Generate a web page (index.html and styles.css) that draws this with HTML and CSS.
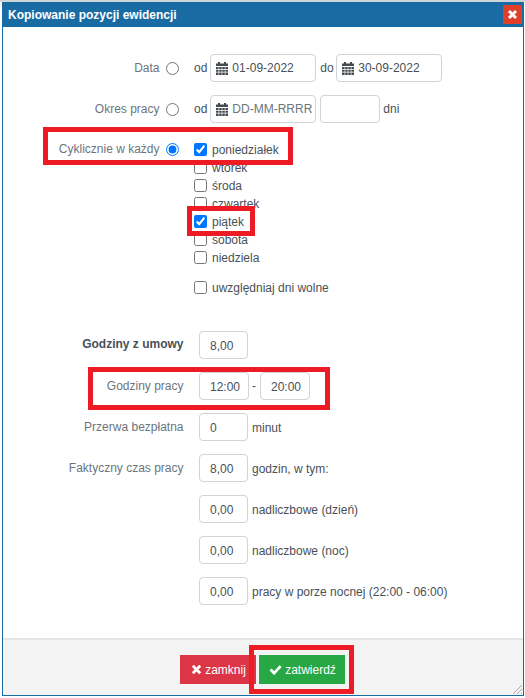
FILE: index.html
```html
<!DOCTYPE html>
<html lang="pl">
<head>
<meta charset="utf-8">
<title>Kopiowanie pozycji ewidencji</title>
<link rel="stylesheet" href="styles.css">
</head>
<body>
<svg class="defs" width="0" height="0" aria-hidden="true">
  <symbol id="cal" viewBox="0 0 12 13">
    <path fill="#454a50" d="M2 0h2v1.5h4V0h2v1.5h2V4H0V1.5h2z"/>
    <path fill="#454a50" d="M0 5h2.6v2.1H0zM3.2 5h2.5v2.1H3.2zM6.3 5h2.5v2.1H6.3zM9.4 5H12v2.1H9.4zM0 7.7h2.6v2.1H0zM3.2 7.7h2.5v2.1H3.2zM6.3 7.7h2.5v2.1H6.3zM9.4 7.7H12v2.1H9.4zM0 10.4h2.6V13H0zM3.2 10.4h2.5V13H3.2zM6.3 10.4h2.5V13H6.3zM9.4 10.4H12V13H9.4z"/>
  </symbol>
</svg>
<div class="dialog">
  <header class="titlebar">
    <h1 class="title">Kopiowanie pozycji ewidencji</h1>
    <span class="close">
      <svg width="11" height="11" viewBox="0 0 11 11"><path d="M2 2l7 7M9 2l-7 7" stroke="#fff" stroke-width="3" fill="none"/></svg>
    </span>
  </header>
  <main class="content">
    <div class="row">
      <label class="lbl">Data</label>
      <input class="radio" type="radio" name="mode">
      <span class="unit unit-od">od</span>
      <div class="field date"><svg class="cal" width="12" height="13"><use href="#cal"/></svg>01-09-2022</div>
      <span class="unit unit-do">do</span>
      <div class="field date"><svg class="cal" width="12" height="13"><use href="#cal"/></svg>30-09-2022</div>
    </div>
    <div class="row">
      <label class="lbl">Okres pracy</label>
      <input class="radio" type="radio" name="mode">
      <span class="unit unit-od">od</span>
      <div class="field date placeholder"><svg class="cal" width="12" height="13"><use href="#cal"/></svg>DD-MM-RRRR</div>
      <div class="field days"></div>
      <span class="unit unit-dni">dni</span>
    </div>
    <div class="cycle">
      <div class="cycle-head">
        <label class="lbl">Cyklicznie w każdy</label>
        <input class="radio" type="radio" name="mode" checked>
      </div>
      <div class="days-list">
        <label class="check"><input type="checkbox" checked>poniedziałek</label>
        <label class="check"><input type="checkbox">wtorek</label>
        <label class="check"><input type="checkbox">środa</label>
        <label class="check"><input type="checkbox">czwartek</label>
        <label class="check"><input type="checkbox" checked>piątek</label>
        <label class="check"><input type="checkbox">sobota</label>
        <label class="check"><input type="checkbox">niedziela</label>
        <label class="check check-free"><input type="checkbox">uwzględniaj dni wolne</label>
      </div>
    </div>
    <div class="hours">
      <div class="row2"><label class="lbl2 strong">Godziny z umowy</label><div class="field num">8,00</div></div>
      <div class="row2"><label class="lbl2">Godziny pracy</label><div class="field num time">12:00</div><span class="dash">-</span><div class="field num time">20:00</div></div>
      <div class="row2"><label class="lbl2">Przerwa bezpłatna</label><div class="field num">0</div><span class="unit">minut</span></div>
      <div class="row2"><label class="lbl2">Faktyczny czas pracy</label><div class="field num">8,00</div><span class="unit">godzin, w tym:</span></div>
      <div class="row2"><span class="lbl2"></span><div class="field num">0,00</div><span class="unit">nadliczbowe (dzień)</span></div>
      <div class="row2"><span class="lbl2"></span><div class="field num">0,00</div><span class="unit">nadliczbowe (noc)</span></div>
      <div class="row2"><span class="lbl2"></span><div class="field num">0,00</div><span class="unit">pracy w porze nocnej (22:00 - 06:00)</span></div>
    </div>
  </main>
  <footer class="footer">
    <button class="btn btn-red" type="button">
      <svg width="11" height="11" viewBox="0 0 11 11"><path d="M1.8 1.8l7.4 7.4M9.2 1.8l-7.4 7.4" stroke="#fff" stroke-width="2.8" fill="none"/></svg>zamknij
    </button>
    <button class="btn btn-green" type="button">
      <svg width="13" height="11" viewBox="0 0 13 11"><path d="M1.5 5.5l3.6 3.6 6.5-7" stroke="#fff" stroke-width="2.8" fill="none"/></svg>zatwierdź
    </button>
    <svg class="grip" width="11" height="11" viewBox="0 0 11 11"><path d="M1 10l9-9M5 10l5-5M9 10l1-1" stroke="#aaa" fill="none"/></svg>
  </footer>
</div>
<div class="mark mark-a"></div>
<div class="mark mark-b"></div>
<div class="mark mark-c"></div>
<div class="mark mark-d"></div>
</body>
</html>
```

FILE: styles.css
```css
* { box-sizing: border-box; }
html, body { margin: 0; padding: 0; }
body {
  position: relative;
  width: 525px;
  height: 698px;
  overflow: hidden;
  background: #fff;
  border-top: 2px solid #cfd4d8;
  font-family: "Liberation Sans", Arial, sans-serif;
  font-size: 12px;
  color: #495057;
}
.defs { position: absolute; }
.dialog {
  display: flex;
  flex-direction: column;
  width: 522px;
  height: 694px;
  margin-left: 2px;
  border: 1px solid #196ca3;
  border-width: 0 1px 1px 1px;
  background: #fff;
}
.titlebar {
  display: flex;
  align-items: center;
  justify-content: space-between;
  flex: none;
  height: 25px;
  padding: 0 1px 0 5px;
  background: #196ca3;
}
.title { margin: 0; font-size: 12px; font-weight: bold; color: #fff; }
.close {
  display: flex;
  align-items: center;
  justify-content: center;
  width: 19px;
  height: 19px;
  background: #e0402a;
}
.content { flex: 1; padding-top: 27px; }
.row { display: flex; align-items: center; height: 28px; margin-bottom: 13px; }
.lbl { width: 156.5px; text-align: right; color: #6c757d; }
.radio { width: 13px; height: 13px; margin: 0 0 0 6.5px; flex: none; }
.unit { white-space: nowrap; color: #495057; }
.unit-od { margin-left: 15px; margin-right: 3px; }
.unit-do { margin-left: 4px; margin-right: 2.5px; }
.unit-dni { margin-left: 3px; }
.field {
  display: flex;
  align-items: center;
  height: 28px;
  border: 1px solid #ced4da;
  border-radius: 4px;
  background: #fff;
  color: #495057;
  white-space: nowrap;
}
.date { width: 106px; padding-left: 5px; }
.cal { flex: none; margin-right: 4px; }
.placeholder { color: #6c757d; }
.days { width: 60px; margin-left: 4px; }
.cycle { position: relative; margin-top: 17px; }
.cycle-head { position: absolute; top: 0; left: 0; display: flex; align-items: center; height: 18px; }
.days-list { display: flex; flex-direction: column; padding-left: 191px; }
.check { display: flex; align-items: center; height: 18px; padding-top: 2px; color: #495057; }
.check input { width: 13px; height: 13px; margin: -2px 5px 0 0; flex: none; }
.check-free { margin-top: 12px; }
.hours { display: flex; flex-direction: column; gap: 13px; margin-top: 35px; }
.row2 { display: flex; align-items: center; height: 28px; }
.row2 .unit { padding-top: 2px; }
.lbl2 { width: 180.5px; margin-right: 15.5px; text-align: right; color: #6c757d; align-self: flex-start; padding-top: 7px; }
.lbl2.strong { font-weight: bold; color: #495057; padding-top: 6px; }
.num { width: 49px; padding: 2px 0 0 10px; margin-right: 4px; }
.time { width: 50px; margin-right: 3px; }
.dash { margin-right: 4px; }
.footer {
  position: relative;
  display: flex;
  justify-content: center;
  gap: 3px;
  flex: none;
  height: 57px;
  padding: 15px 1px 0 0;
  border-top: 2px solid #e5e5e5;
  background: #f3f3f3;
}
.btn {
  display: flex;
  align-items: center;
  justify-content: center;
  gap: 3px;
  height: 29px;
  padding: 0 0 0 1px;
  border: 0;
  color: #fff;
  font-family: inherit;
  font-size: 12px;
}
.btn-red { width: 76px; background: #dc3545; }
.btn-green { width: 86px; background: #28a745; }
.grip { position: absolute; right: 0; bottom: 0; }
.mark { position: absolute; border: 5px solid #ed1c24; pointer-events: none; }
.mark-a { left: 43px; top: 125px; width: 250px; height: 38px; }
.mark-b { left: 187px; top: 204px; width: 68px; height: 30px; }
.mark-c { left: 88px; top: 365px; width: 242px; height: 43px; }
.mark-d { left: 249px; top: 643px; width: 105px; height: 49px; }
```
